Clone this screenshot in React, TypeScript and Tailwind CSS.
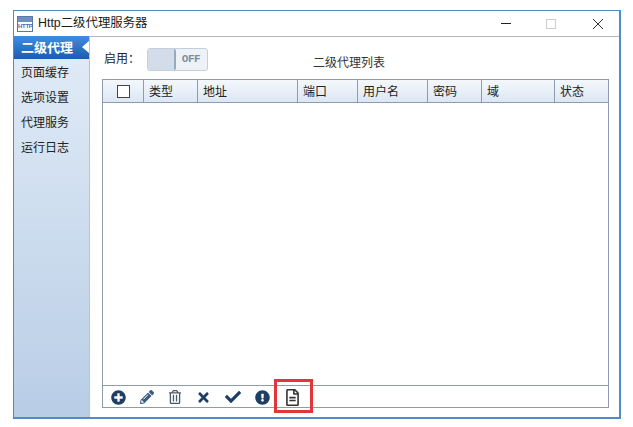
import { FaCheck, FaExclamationCircle, FaPencilAlt, FaPlusCircle, FaRegFileAlt, FaRegTrashAlt, FaTimes } from "react-icons/fa";

const cjk = "font-['Liberation_Sans','Noto_Sans_CJK_SC',sans-serif]";

const menu = ["页面缓存", "选项设置", "代理服务", "运行日志"];

const columns = [
  { label: "类型", width: "w-[54px]" },
  { label: "地址", width: "w-[100px]" },
  { label: "端口", width: "w-[60px]" },
  { label: "用户名", width: "w-[70px]" },
  { label: "密码", width: "w-[54px]" },
  { label: "域", width: "w-[73px]" },
  { label: "状态", width: "flex-1" },
];

function TitleBar() {
  return (
    <div className="flex h-[25px] items-center pl-[3px] pr-[15px]">
      <div className="flex h-[16px] w-[16px] flex-col border border-[#5b78a8] bg-white">
        <div className="h-[5px] bg-[#6f8fc0]" />
        <div className="flex-1 text-center font-['Liberation_Sans',sans-serif] text-[6px] font-bold leading-[9px] tracking-[-0.3px] text-[#4a6aa0]">
          HTTP
        </div>
      </div>
      <span className="ml-[5px] text-[12.4px] leading-none text-[#1a1a1a]">Http二级代理服务器</span>
      <div className="ml-auto flex items-center">
        <div className="h-[1px] w-[10px] bg-[#222]" />
        <div className="ml-[35px] h-[10px] w-[10px] border border-[#cfcfcf]" />
        <svg className="ml-[36px]" width="12" height="12" viewBox="0 0 12 12">
          <path d="M1 1 L11 11 M11 1 L1 11" stroke="#333" strokeWidth="1" fill="none" />
        </svg>
      </div>
    </div>
  );
}

function Sidebar() {
  return (
    <div className="w-[76px] shrink-0 border-r border-[#b4c6da] bg-gradient-to-b from-[#e2ecf7] to-[#b8cde6]">
      <div className="relative mb-[1px] flex h-[23px] items-center bg-gradient-to-b from-[#3f8ee2] to-[#1a5cb2] pl-[7px] text-[13px] font-bold text-white">
        二级代理
        <div className="absolute right-0 top-[5px] h-0 w-0 border-y-[6px] border-r-[7px] border-y-transparent border-r-white" />
      </div>
      {menu.map((item) => (
        <div key={item} className="flex h-[25px] items-center pl-[7px] text-[12px] text-[#222]">
          {item}
        </div>
      ))}
    </div>
  );
}

function ProxyPanel() {
  return (
    <div className="flex min-w-0 flex-1 flex-col border-t border-[#b5b5b5] pb-[9px] pl-[12px] pr-[10px]">
      <div className="relative flex h-[42px] shrink-0 items-start pt-[11px]">
        <span className="mt-[3px] w-[45px] pl-[2px] text-[12px] leading-[16px] text-[#222]">启用：</span>
        <div className="flex h-[23px] w-[61px] overflow-hidden rounded-[3px] border border-[#c3cfdc] bg-[#eef2f7]">
          <div className="w-[28px] rounded-[2px] border-r-2 border-[#98a9bc] bg-[#d3dde9]" />
          <span className="flex-1 pr-[1px] text-center font-['Liberation_Mono',monospace] text-[11px] font-bold leading-[20px] tracking-[-0.5px] text-[#7d8da0]">
            OFF
          </span>
        </div>
        <span className="ml-[105px] mt-[7px] text-[12px] leading-[16px] text-[#333]">二级代理列表</span>
      </div>
      <div className="flex min-h-0 flex-1 flex-col border border-[#8e9dad]">
        <div className="flex h-[23px] shrink-0 border-b border-[#8e9dad] bg-gradient-to-b from-[#f4f8fc] to-[#dce7f4]">
          <div className="flex w-[41px] items-center justify-center border-r border-[#8e9dad]">
            <div className="h-[13px] w-[13px] border border-[#444] bg-white" />
          </div>
          {columns.map((col, i) => (
            <div
              key={col.label}
              className={`flex items-center pl-[5px] pt-[2px] text-[12px] text-[#222] ${col.width} ${i < columns.length - 1 ? "border-r border-[#8e9dad]" : ""}`}
            >
              {col.label}
            </div>
          ))}
        </div>
        <div className="flex-1 bg-white" />
        <div className="flex h-[22px] shrink-0 items-center border-t border-[#8e9dad] pl-[8px] pt-[1px] text-[#1d3f66]">
          <FaPlusCircle size={15} />
          <FaPencilAlt size={14} className="ml-[14px] text-[#3a5a80]" />
          <FaRegTrashAlt size={14} className="ml-[14px] text-[#4a5a6a]" />
          <FaTimes size={15} className="ml-[14px]" />
          <FaCheck size={16} className="ml-[14px]" />
          <FaExclamationCircle size={15} className="ml-[14px]" />
          <FaRegFileAlt size={17} className="ml-[14px] text-[#333]" />
        </div>
      </div>
      <div className="absolute left-[274px] top-[379px] h-[34px] w-[39px] border-[3px] border-[#e2363b]" />
    </div>
  );
}

export default function App() {
  return (
    <div className={`relative h-[427px] w-[633px] overflow-hidden bg-white pb-[8px] pl-[13px] pr-[12px] pt-[10px] ${cjk}`}>
      <div className="flex h-full flex-col border border-b-[2px] border-r-[2px] border-[#4f8ccb] bg-white">
        <TitleBar />
        <div className="flex min-h-0 flex-1">
          <Sidebar />
          <ProxyPanel />
        </div>
      </div>
    </div>
  );
}
